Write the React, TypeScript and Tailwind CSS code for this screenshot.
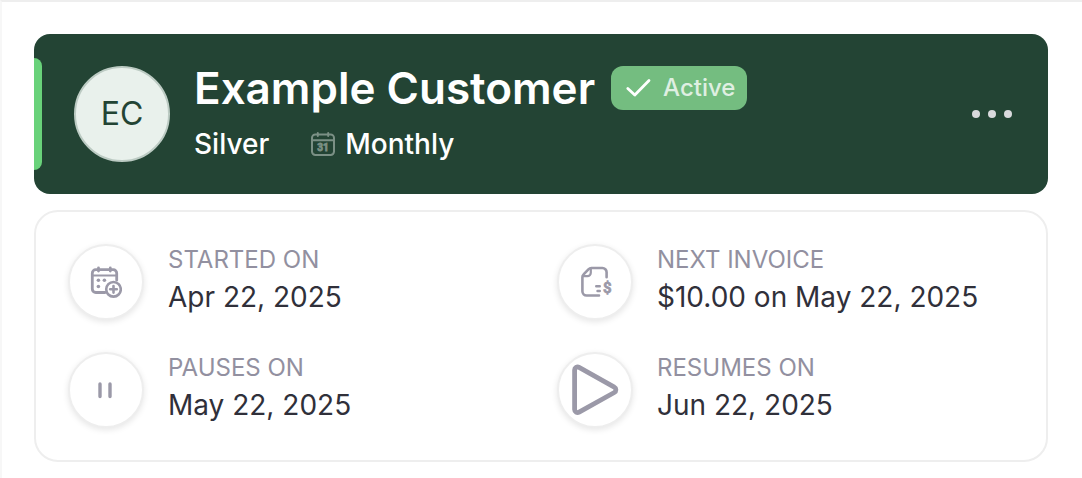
import type { ReactNode } from "react";

function MonthIcon() {
  return (
    <svg width="24" height="24" viewBox="0 0 24 24" fill="none" stroke="currentColor" strokeWidth="2" strokeLinecap="round" aria-hidden="true">
      <rect x="1" y="2.4" width="22" height="20.6" rx="3.4" />
      <path d="M1 8.2h22M6.8 1v3M17.2 1v3" />
      <text x="12" y="19" textAnchor="middle" fill="currentColor" strokeWidth="0.8" className="font-['Roboto',sans-serif] text-[10px] font-bold">
        31
      </text>
    </svg>
  );
}

function CalendarPlusIcon() {
  return (
    <svg width="32" height="32" viewBox="0 0 32 32" fill="none" stroke="currentColor" strokeWidth="2.8" strokeLinecap="round" strokeLinejoin="round" aria-hidden="true">
      <path d="M15 26.5H5.8a3.5 3.5 0 0 1-3.5-3.5V7.2a3.5 3.5 0 0 1 3.5-3.5h17.4a3.5 3.5 0 0 1 3.5 3.5v7" />
      <path d="M2.3 9.5h24.4" strokeWidth="2.2" />
      <path d="M8.5 2v3M20.3 2v3" />
      <g fill="currentColor" stroke="none">
        <circle cx="8.4" cy="14.3" r="1.8" />
        <circle cx="14.4" cy="14.3" r="1.8" />
        <circle cx="8.4" cy="20.5" r="1.8" />
      </g>
      <circle cx="23.5" cy="23.3" r="7.3" strokeWidth="2.6" />
      <path d="M23.5 20v6.6M20.2 23.3h6.6" strokeWidth="2.6" />
    </svg>
  );
}

function InvoiceIcon() {
  return (
    <svg width="32" height="32" viewBox="0 0 32 32" fill="none" stroke="currentColor" strokeWidth="2.6" strokeLinecap="round" strokeLinejoin="round" className="overflow-visible" aria-hidden="true">
      <path d="M20 29.5H7.6a4.2 4.2 0 0 1-4.2-4.2V11.4c0-1.2.4-2.2 1.2-3L9.4 3.3c.8-.8 1.8-1.3 3-1.3h11a4.2 4.2 0 0 1 4.2 4.2v5" />
      <path d="M11.8 2.4v4.4a3.4 3.4 0 0 1-3.4 3.4H3.8" strokeWidth="2.2" />
      <path d="M17.3 20.3h3.4M18.6 25h2.1" />
      <text x="28.2" y="27.4" textAnchor="middle" fill="currentColor" strokeWidth="0.7" className="font-['Roboto',sans-serif] text-[15px] font-bold">
        $
      </text>
    </svg>
  );
}

function PauseIcon() {
  return (
    <svg width="32" height="32" viewBox="0 0 32 32" fill="none" stroke="currentColor" strokeWidth="3.4" strokeLinecap="round" aria-hidden="true">
      <path d="M10 10v12.5M20 10v12.5" />
    </svg>
  );
}

function PlayIcon() {
  return (
    <svg width="64" height="64" viewBox="0 0 64 64" fill="none" stroke="currentColor" strokeWidth="4.8" strokeLinejoin="round" className="shrink-0" aria-hidden="true">
      <path d="M11.6 12v39.6a3 3 0 0 0 4.5 2.6l35.2-19.7a3 3 0 0 0 0-5.3L16.1 9.4A3 3 0 0 0 11.6 12Z" />
    </svg>
  );
}

function Detail({ label, value, icon }: { label: string; value: string; icon: ReactNode }) {
  return (
    <div className="flex items-start gap-6">
      <div className="flex size-[76px] shrink-0 items-center justify-center rounded-full border-2 border-[#eeeeee] bg-white text-[#9b99a8] shadow-[0_2px_6px_rgba(0,0,0,0.1)]">
        {icon}
      </div>
      <dl>
        <dt className="text-2xl leading-8 text-[#9290a0] uppercase">{label}</dt>
        <dd className="text-[28px] leading-[42px] text-[#30303a]">{value}</dd>
      </dl>
    </div>
  );
}

export default function App() {
  return (
    <main className="flex min-h-screen flex-col gap-4 border-t-2 border-l-2 border-t-[#eeeeee] border-l-[#f7f7f7] bg-white py-8 pr-[34px] pl-8 font-['Inter',sans-serif]">
      <header className="flex items-center overflow-hidden rounded-2xl bg-[#234434] py-8 pr-8 text-white">
        <div className="-my-2 h-28 w-2 shrink-0 rounded-r-lg bg-[#69d27a]" />
        <div className="ml-8 flex size-24 shrink-0 items-center justify-center rounded-full border-2 border-[#bccbc3] bg-[#e9f1ec] text-[32px] text-[#234434]">
          EC
        </div>
        <div className="ml-6 flex flex-col gap-4">
          <div className="flex items-center gap-4">
            <h1 className="text-[44px] leading-[44px] font-semibold">Example Customer</h1>
            <span className="flex h-11 items-center gap-3 rounded-xl bg-[#74bd80] px-3 text-2xl font-medium text-[#dfefe2]">
              <svg width="28" height="28" viewBox="0 0 28 28" fill="none" stroke="white" strokeWidth="2.8" strokeLinecap="round" strokeLinejoin="round" aria-hidden="true">
                <path d="M4.8 14.5l7 6.5L26 6.5" />
              </svg>
              Active
            </span>
          </div>
          <div className="flex items-center gap-[42px] text-[28px] leading-9 font-medium">
            <span>Silver</span>
            <span className="flex items-center gap-2.5">
              <span className="text-[#7b9085]">
                <MonthIcon />
              </span>
              Monthly
            </span>
          </div>
        </div>
        <button type="button" aria-label="More actions" className="ml-auto flex gap-2 p-1">
          <span className="size-2 rounded-full bg-[#d9d9dc]" />
          <span className="size-2 rounded-full bg-[#d9d9dc]" />
          <span className="size-2 rounded-full bg-[#d9d9dc]" />
        </button>
      </header>

      <section className="grid grid-cols-2 gap-8 rounded-3xl border-2 border-[#eeeeee] p-8">
        <Detail label="Started on" value="Apr 22, 2025" icon={<CalendarPlusIcon />} />
        <Detail label="Next invoice" value="$10.00 on May 22, 2025" icon={<InvoiceIcon />} />
        <Detail label="Pauses on" value="May 22, 2025" icon={<PauseIcon />} />
        <Detail label="Resumes on" value="Jun 22, 2025" icon={<PlayIcon />} />
      </section>
    </main>
  );
}
